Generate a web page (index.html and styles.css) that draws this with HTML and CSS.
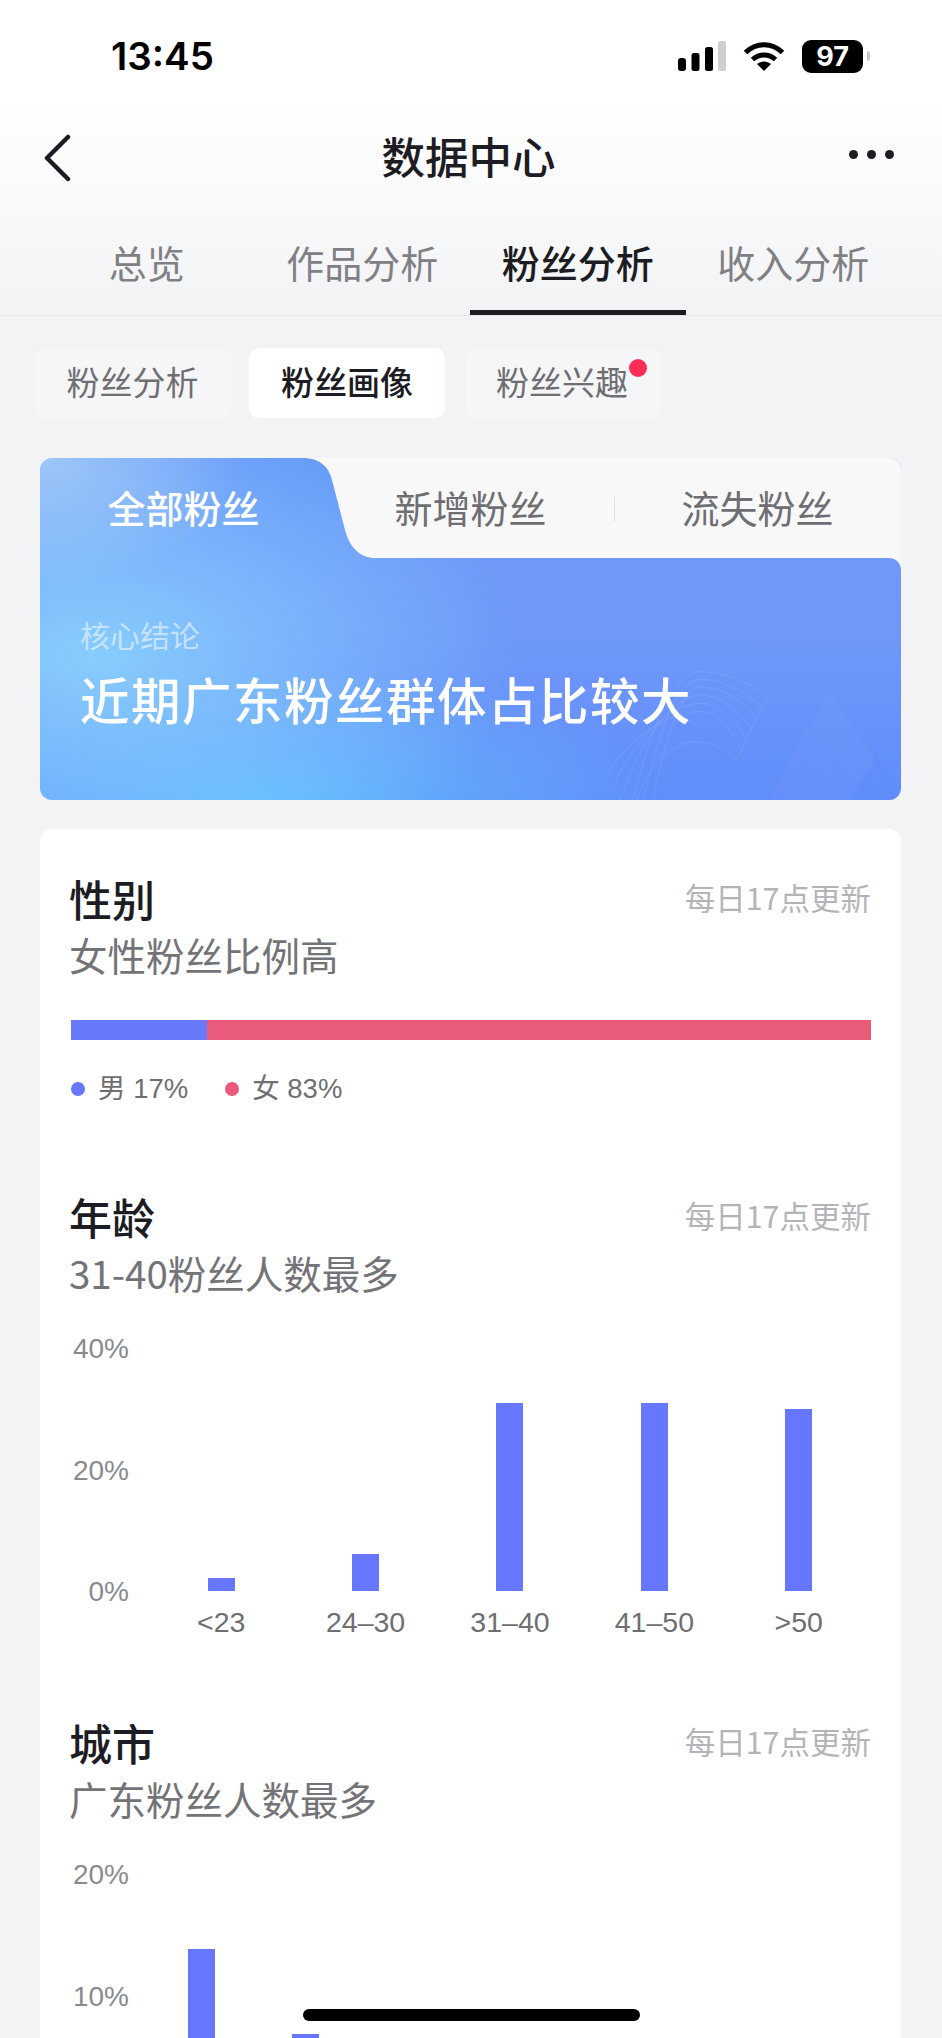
FILE: index.html
```html
<!DOCTYPE html>
<html lang="zh-CN">
<head>
    <meta charset="UTF-8">
    <meta name="viewport" content="width=device-width, initial-scale=1.0">
    <title>数据中心</title>
    <link rel="stylesheet" href="styles.css">
</head>
<body>

    <header class="top">
        <div class="status">
            <span class="time">13:45</span>
            <div class="status-icons">
                <svg class="signal" width="48" height="30" viewBox="0 0 48 30">
                    <rect x="0" y="17" width="8" height="13" rx="3" fill="#000"/>
                    <rect x="13.500" y="12" width="8" height="18" rx="2.500" fill="#000"/>
                    <rect x="27" y="6" width="8" height="24" rx="2.500" fill="#000"/>
                    <rect x="40" y="0" width="8" height="30" rx="2.500" fill="#cfcfcf"/>
                </svg>
                <svg class="wifi" width="42" height="30" viewBox="0 0 42 30">
                    <path d="M2.500 11.500C13 1 29 1 39.500 11.500" fill="none" stroke="#000" stroke-width="5"/>
                    <path d="M9.500 18.500C16 12.500 26 12.500 32.500 18.500" fill="none" stroke="#000" stroke-width="5"/>
                    <path d="M21 30L14 23C18 19.500 24 19.500 28 23Z" fill="#000"/>
                </svg>
                <div class="battery"><span class="battery-level">97</span><span class="battery-nub"></span></div>
            </div>
        </div>

        <nav class="nav">
            <svg class="back" width="28" height="48" viewBox="0 0 28 48">
                <path d="M25 3L4 24L25 45" fill="none" stroke="#1c1c22" stroke-width="4.500" stroke-linecap="round" stroke-linejoin="round"/>
            </svg>
            <h1 class="nav-title">数据中心</h1>
            <div class="more"><i></i><i></i><i></i></div>
        </nav>

        <div class="tabs">
            <a class="tab">总览</a>
            <a class="tab">作品分析</a>
            <a class="tab tab-active">粉丝分析</a>
            <a class="tab">收入分析</a>
        </div>
    </header>

    <div class="sub-tabs">
        <a class="sub-tab">粉丝分析</a>
        <a class="sub-tab sub-tab-active">粉丝画像</a>
        <a class="sub-tab sub-tab-dot">粉丝兴趣</a>
    </div>

    <main>
        <section class="hero">
            <!-- white notch behind the two inactive tabs -->
            <svg class="hero-notch" width="861" height="112" viewBox="0 0 861 112">
                <path d="M263 0C280 0 289 9 292 22L305 72C310 90 320 100 336 100H849C856 100 861 105 861 112V0Z" fill="#f8f8f9"/>
            </svg>
            <!-- faint line pattern bottom right -->
            <svg class="hero-lines" width="310" height="170" viewBox="0 0 930 510">
                <defs>
                    <pattern id="hatch" width="9" height="9" patternUnits="userSpaceOnUse" patternTransform="rotate(28)">
                        <rect width="3" height="9" fill="#fff" fill-opacity="0.07"/>
                    </pattern>
                </defs>
                <g fill="none" stroke="#fff" stroke-opacity="0.09" stroke-width="3">
                    <path d="M100 480C150 280 210 100 300 95C380 95 450 130 500 170L410 360"/>
                    <path d="M130 480C170 300 225 120 300 118C365 118 430 150 485 202"/>
                    <path d="M160 480C190 320 240 142 300 141C360 141 415 170 470 234"/>
                    <path d="M60 480C110 330 210 168 300 165C350 165 400 192 455 266"/>
                    <path d="M40 440C90 320 200 192 300 190C345 190 390 216 440 298"/>
                    <path d="M20 400C80 310 190 216 300 215C340 215 380 240 425 330"/>
                    <path d="M110 480C140 390 210 300 300 305C340 310 380 335 410 360"/>
                </g>
                <path d="M505 480L690 150L900 480Z" fill="url(#hatch)"/>
                <path d="M755 480L830 345L905 480Z" fill="#5f8bfa" fill-opacity="0.6"/>
            </svg>
            <div class="hero-tabs">
                <a class="hero-tab hero-tab-active">全部粉丝</a>
                <a class="hero-tab">新增粉丝</a>
                <a class="hero-tab hero-tab-sep">流失粉丝</a>
            </div>
            <p class="hero-label">核心结论</p>
            <p class="hero-title">近期广东粉丝群体占比较大</p>
        </section>

        <section class="card">
            <div class="block">
                <div class="block-head">
                    <h2>性别</h2>
                    <span class="update">每日17点更新</span>
                </div>
                <p class="block-sub">女性粉丝比例高</p>
                <div class="gender-bar">
                    <span class="gender-male" style="width: 17%"></span>
                    <span class="gender-female" style="width: 83%"></span>
                </div>
                <div class="legend">
                    <span class="legend-item"><i class="dot dot-male"></i>男 17%</span>
                    <span class="legend-item"><i class="dot dot-female"></i>女 83%</span>
                </div>
            </div>

            <div class="block block-age">
                <div class="block-head">
                    <h2>年龄</h2>
                    <span class="update">每日17点更新</span>
                </div>
                <p class="block-sub">31-40粉丝人数最多</p>
                <div class="chart">
                    <div class="axis">
                        <span>40%</span>
                        <span>20%</span>
                        <span>0%</span>
                    </div>
                    <div class="plot plot-age">
                        <div class="col"><span class="bar" style="height: 13px"></span></div>
                        <div class="col"><span class="bar" style="height: 37px"></span></div>
                        <div class="col"><span class="bar" style="height: 188px"></span></div>
                        <div class="col"><span class="bar" style="height: 188px"></span></div>
                        <div class="col"><span class="bar" style="height: 182px"></span></div>
                    </div>
                </div>
                <div class="x-labels">
                    <span>&lt;23</span>
                    <span>24–30</span>
                    <span>31–40</span>
                    <span>41–50</span>
                    <span>&gt;50</span>
                </div>
            </div>

            <div class="block block-city">
                <div class="block-head">
                    <h2>城市</h2>
                    <span class="update">每日17点更新</span>
                </div>
                <p class="block-sub">广东粉丝人数最多</p>
                <div class="chart">
                    <div class="axis">
                        <span>20%</span>
                        <span>10%</span>
                        <span></span>
                    </div>
                    <div class="plot plot-city">
                        <div class="col"><span class="bar" style="height: 168px"></span></div>
                        <div class="col"><span class="bar" style="height: 83px"></span></div>
                    </div>
                </div>
            </div>
        </section>
    </main>

    <div class="home-bar"></div>

</body>
</html>
```

FILE: styles.css
```css
* {
    margin: 0;
    padding: 0;
    box-sizing: border-box;
}
html, body {
    height: 2038px;
    overflow: hidden;
}
body {
    position: relative;
    font-family: "Noto Sans CJK SC", "Liberation Sans", sans-serif;
    background-color: #f2f3f5;
    color: #1c1c22;
}

/* header */
.top {
    height: 316px;
    background: linear-gradient(180deg, #fff 0%, #fff 30%, #f2f3f5 100%);
    border-bottom: 1px solid #e4e4e8;
}
.status {
    height: 112px;
    padding: 0 72px 0 111px;
    display: flex;
    align-items: center;
    justify-content: space-between;
}
.time {
    font-family: Inter, sans-serif;
    font-size: 38.500px;
    font-weight: 600;
    color: #000;
}
.status-icons {
    display: flex;
    align-items: center;
    gap: 17px;
}
.battery {
    display: flex;
    align-items: center;
    gap: 4px;
}
.battery-level {
    width: 61px;
    height: 33px;
    background-color: #000;
    border-radius: 9px;
    color: #fff;
    font-family: Inter, sans-serif;
    font-size: 27px;
    font-weight: 700;
    line-height: 33px;
    text-align: center;
}
.battery-nub {
    width: 3px;
    height: 10px;
    background-color: #c4c4c4;
    border-radius: 0 3px 3px 0;
}
.nav {
    height: 92px;
    padding: 0 48px 0 43px;
    display: grid;
    grid-template-columns: 1fr auto 1fr;
    align-items: center;
}
.nav-title {
    margin-bottom: 4px;
    font-size: 43.500px;
    font-weight: 500;
    line-height: 60px;
}
.more {
    display: flex;
    justify-content: flex-end;
    gap: 9px;
    margin-bottom: 8px;
}
.more i {
    width: 9px;
    height: 9px;
    border-radius: 50%;
    background-color: #1c1c22;
}
.tabs {
    height: 111px;
    padding: 0 41px 0 39px;
    display: grid;
    grid-template-columns: repeat(4, 1fr);
}
.tab {
    padding-top: 32px;
    font-size: 38px;
    line-height: 52px;
    text-align: center;
    color: #808084;
}
.tab-active {
    color: #1c1c22;
    font-weight: 500;
    border-bottom: 5px solid #1c1c22;
}

/* second level tabs */
.sub-tabs {
    display: flex;
    gap: 18px;
    padding: 32px 0 0 35px;
}
.sub-tab {
    width: 196px;
    height: 70px;
    padding-right: 1px;
    background-color: #f6f6f8;
    border-radius: 10px;
    font-size: 33px;
    line-height: 66px;
    text-align: center;
    color: #6e6e73;
}
.sub-tab-active {
    padding-right: 0;
    background-color: #fff;
    color: #1c1c22;
    font-weight: 500;
}
.sub-tab-dot {
    position: relative;
    width: 195px;
    margin-left: 3px;
    padding-right: 3px;
}
.sub-tab-dot::after {
    content: "";
    position: absolute;
    top: 11px;
    left: 163px;
    width: 18px;
    height: 18px;
    border-radius: 50%;
    background-color: #fb2c55;
}

main {
    padding: 40px 41px 0 40px;
}

/* conclusion card */
.hero {
    position: relative;
    height: 342px;
    border-radius: 12px;
    overflow: hidden;
    color: #fff;
    background:
        radial-gradient(ellipse 200px 130px at 0% 0%, rgba(175, 214, 247, 0.7), rgba(175, 214, 247, 0) 100%),
        radial-gradient(ellipse 430px 250px at 6% 58%, rgb(135, 205, 253), rgba(135, 205, 253, 0) 100%),
        radial-gradient(ellipse 400px 130px at 26% 100%, rgba(96, 188, 253, 0.95), rgba(96, 188, 253, 0) 100%),
        radial-gradient(ellipse 160px 120px at 32% 6%, rgba(88, 155, 248, 0.5), rgba(88, 155, 248, 0) 100%),
        linear-gradient(180deg, #7199f9 0%, #6f98f9 50%, #618dfa 100%);
}
.hero-notch {
    position: absolute;
    top: 0;
    left: 0;
}
.hero-lines {
    position: absolute;
    right: -9px;
    bottom: -10px;
}
.hero-tabs {
    position: relative;
    height: 100px;
    display: grid;
    grid-template-columns: repeat(3, 1fr);
}
.hero-tab {
    font-size: 38px;
    line-height: 98px;
    text-align: center;
    color: #6e6e73;
}
.hero-tab-active {
    color: #fff;
    font-weight: 500;
}
.hero-tab-sep {
    position: relative;
}
.hero-tab-sep::before {
    content: "";
    position: absolute;
    left: 0;
    top: 39px;
    height: 25px;
    border-left: 1px solid #e2e2e6;
}
.hero-label {
    position: relative;
    margin: 56px 0 0 40px;
    font-size: 30px;
    line-height: 40px;
    color: rgba(255, 255, 255, 0.55);
}
.hero-title {
    position: relative;
    margin: 15px 0 0 40px;
    font-size: 49.500px;
    font-weight: 500;
    letter-spacing: 1.500px;
    line-height: 60px;
}

/* stats card */
.card {
    margin-top: 29px;
    height: 1209px;
    padding: 41px 30px 0 31px;
    background-color: #fff;
    border-radius: 12px 12px 0 0;
    overflow: hidden;
}
.block-age {
    margin-top: 81px;
}
.block-city {
    margin-top: 77px;
}
.block-head {
    display: flex;
    align-items: center;
    justify-content: space-between;
}
.block-head h2 {
    margin-left: -2px;
    font-size: 43px;
    font-weight: 500;
    line-height: 56px;
}
.update {
    margin-bottom: 2px;
    font-size: 30.500px;
    color: #b4b4b8;
}
.block-sub {
    margin: 3px 0 0 -2px;
    font-size: 38.500px;
    line-height: 50px;
    color: #737378;
}
.gender-bar {
    display: flex;
    height: 20px;
    margin-top: 41px;
}
.gender-male {
    background-color: #6778fb;
}
.gender-female {
    background-color: #ea5a7a;
}
.legend {
    display: flex;
    gap: 37px;
    margin-top: 31px;
    font-family: "Liberation Sans", "Noto Sans CJK SC", sans-serif;
    font-size: 27.500px;
    line-height: 36px;
    color: #6e6e73;
}
.legend-item {
    display: flex;
    align-items: center;
}
.dot {
    width: 14px;
    height: 14px;
    margin-right: 13px;
    border-radius: 50%;
}
.dot-male {
    background-color: #6778fb;
}
.dot-female {
    background-color: #ea5a7a;
}

/* bar charts */
.chart {
    display: flex;
    gap: 20px;
    margin-top: 37px;
    font-family: "Liberation Sans", sans-serif;
}
.axis {
    width: 58px;
    height: 273px;
    flex-shrink: 0;
    display: flex;
    flex-direction: column;
    justify-content: space-between;
    font-size: 28px;
    line-height: 30px;
    text-align: right;
    color: #8a8a8e;
}
.axis span {
    min-height: 30px;
}
.plot {
    flex: 1;
    height: 257px;
    display: grid;
    align-items: end;
    justify-items: center;
}
.plot-age {
    grid-template-columns: repeat(5, 144.400px);
}
.plot-city {
    padding-left: 1px;
    grid-template-columns: repeat(7, 103.500px);
}
.col {
    display: flex;
    align-items: flex-end;
}
.bar {
    display: block;
    width: 27px;
    background-color: #6677fd;
}
.x-labels {
    display: grid;
    grid-template-columns: repeat(5, 144.400px);
    margin-left: 78px;
    font-family: "Liberation Sans", sans-serif;
    font-size: 28.500px;
    line-height: 30px;
    text-align: center;
    color: #6e6e73;
}

.home-bar {
    position: absolute;
    left: 303px;
    top: 2009px;
    width: 337px;
    height: 12px;
    border-radius: 6px;
    background-color: #000;
}
```
